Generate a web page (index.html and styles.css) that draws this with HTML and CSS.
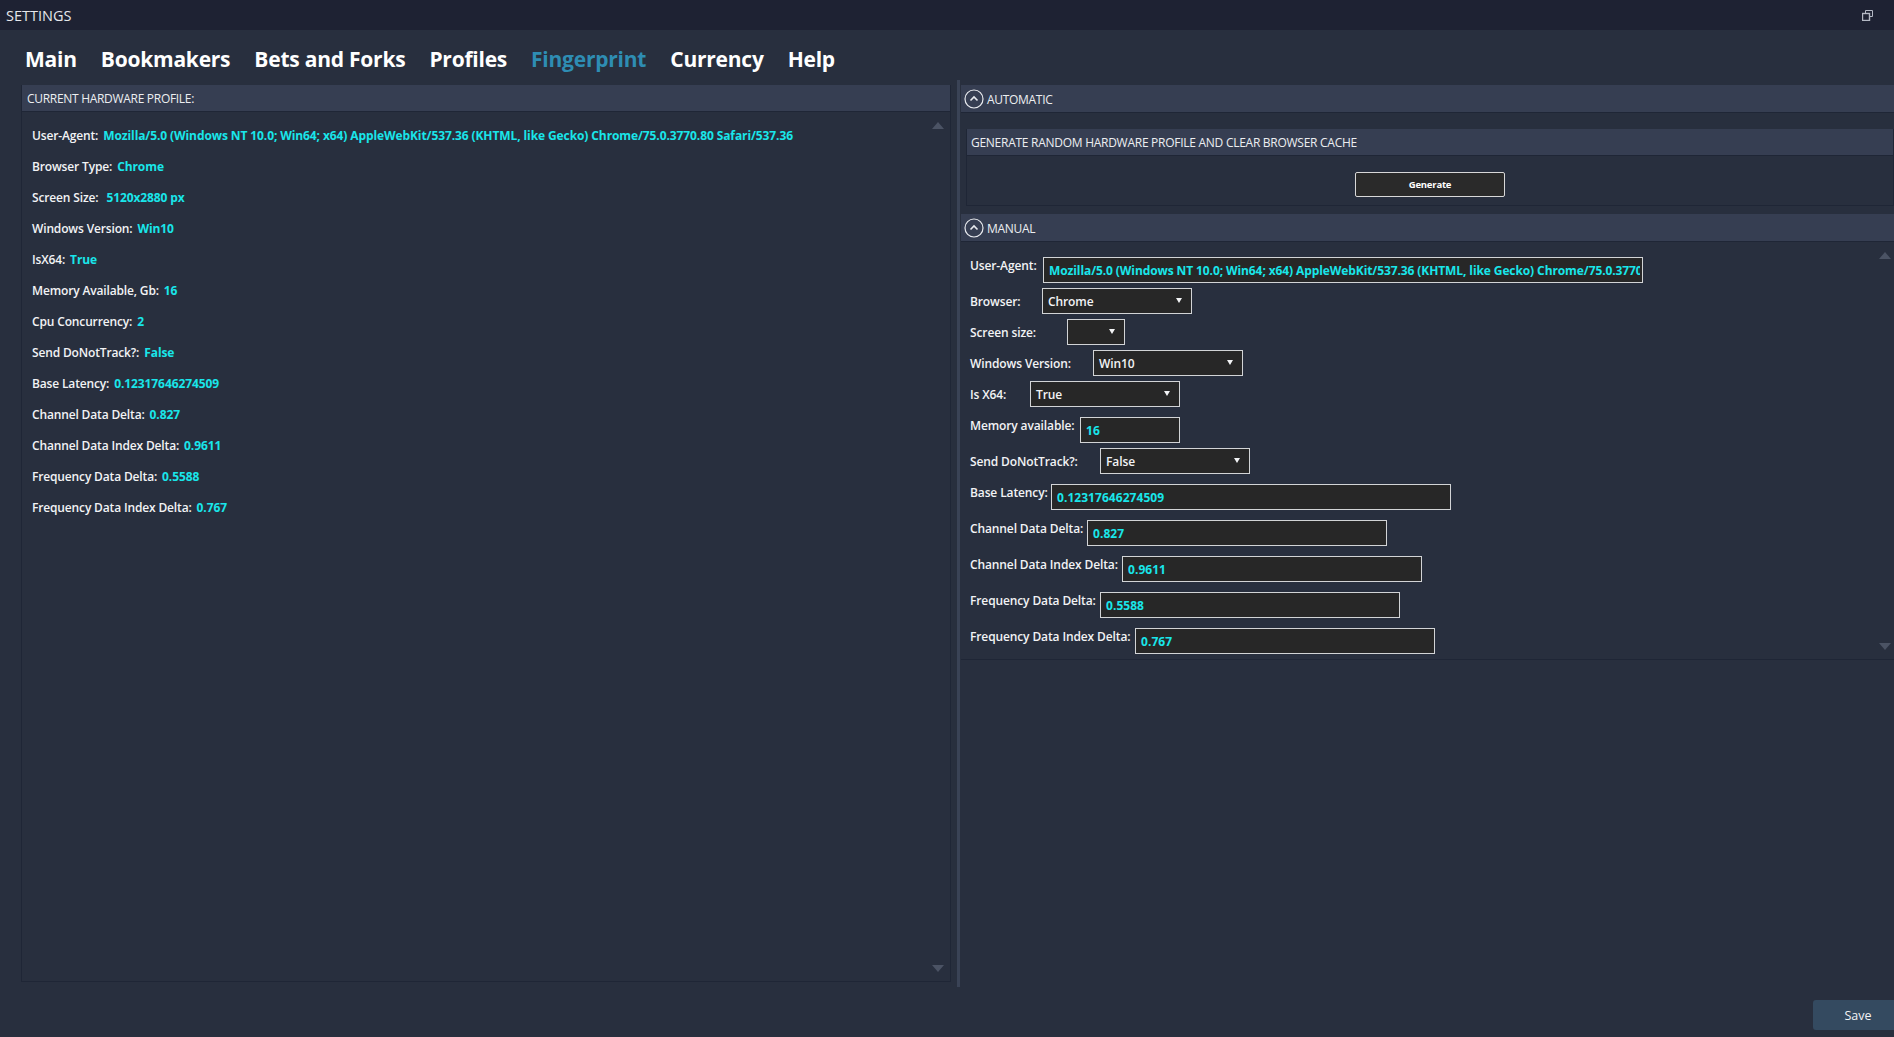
FILE: index.html
```html
<!DOCTYPE html>
<html lang="en">
<head>
    <meta charset="UTF-8">
    <title>Settings</title>
    <link rel="stylesheet" href="styles.css">
</head>
<body>
    <div class="titlebar">
        <span class="title">SETTINGS</span>
        <svg class="restore" width="11" height="11" viewBox="0 0 11 11" fill="none" stroke="#b4b8c4" stroke-width="1">
            <path d="M3.5 3V.5h7v6H8"/>
            <rect x=".5" y="3.5" width="7" height="7" stroke-width="1.4"/>
        </svg>
    </div>

    <nav class="tabs">
        <a>Main</a>
        <a>Bookmakers</a>
        <a>Bets and Forks</a>
        <a>Profiles</a>
        <a class="active">Fingerprint</a>
        <a>Currency</a>
        <a>Help</a>
    </nav>

    <div class="columns">
        <section class="current">
            <div class="bar">CURRENT HARDWARE PROFILE:</div>
            <div class="current-list">
                <span class="arrow arrow-up"></span>
                <p><b>User-Agent:</b><i>Mozilla/5.0 (Windows NT 10.0; Win64; x64) AppleWebKit/537.36 (KHTML, like Gecko) Chrome/75.0.3770.80 Safari/537.36</i></p>
                <p><b>Browser Type:</b><i>Chrome</i></p>
                <p><b>Screen Size:</b><i class="wide">5120x2880 px</i></p>
                <p><b>Windows Version:</b><i>Win10</i></p>
                <p><b>IsX64:</b><i>True</i></p>
                <p><b>Memory Available, Gb:</b><i>16</i></p>
                <p><b>Cpu Concurrency:</b><i>2</i></p>
                <p><b>Send DoNotTrack?:</b><i>False</i></p>
                <p><b>Base Latency:</b><i>0.12317646274509</i></p>
                <p><b>Channel Data Delta:</b><i>0.827</i></p>
                <p><b>Channel Data Index Delta:</b><i>0.9611</i></p>
                <p><b>Frequency Data Delta:</b><i>0.5588</i></p>
                <p><b>Frequency Data Index Delta:</b><i>0.767</i></p>
                <span class="arrow arrow-down"></span>
            </div>
        </section>

        <div class="divider"></div>

        <section class="settings">
            <div class="bar bar-toggle">
                <svg class="chevron" width="20" height="20" viewBox="0 0 20 20" fill="none" stroke="#e8eaee">
                    <circle cx="10" cy="10" r="9" stroke-width="1.2"/>
                    <path d="M6.5 11.5 10 8l3.5 3.5" stroke-width="1.6"/>
                </svg>
                AUTOMATIC
            </div>
            <div class="auto-box">
                <div class="bar">GENERATE RANDOM HARDWARE PROFILE AND CLEAR BROWSER CACHE</div>
                <div class="auto-action">
                    <button class="generate">Generate</button>
                </div>
            </div>

            <div class="bar bar-toggle">
                <svg class="chevron" width="20" height="20" viewBox="0 0 20 20" fill="none" stroke="#e8eaee">
                    <circle cx="10" cy="10" r="9" stroke-width="1.2"/>
                    <path d="M6.5 11.5 10 8l3.5 3.5" stroke-width="1.6"/>
                </svg>
                MANUAL
            </div>
            <div class="manual">
                <span class="arrow arrow-up"></span>
                <div class="row row-text row-first">
                    <label class="l-agent">User-Agent:</label>
                    <div class="field f-agent"><span class="field-clip">Mozilla/5.0 (Windows NT 10.0; Win64; x64) AppleWebKit/537.36 (KHTML, like Gecko) Chrome/75.0.3770.80 Safari/537.36</span></div>
                </div>
                <div class="row">
                    <label class="l-browser">Browser:</label>
                    <div class="select">Chrome</div>
                </div>
                <div class="row">
                    <label class="l-screen">Screen size:</label>
                    <div class="select select-small"></div>
                </div>
                <div class="row">
                    <label class="l-windows">Windows Version:</label>
                    <div class="select">Win10</div>
                </div>
                <div class="row">
                    <label class="l-x64">Is X64:</label>
                    <div class="select">True</div>
                </div>
                <div class="row row-text">
                    <label class="l-memory">Memory available:</label>
                    <div class="field f-memory">16</div>
                </div>
                <div class="row">
                    <label class="l-track">Send DoNotTrack?:</label>
                    <div class="select">False</div>
                </div>
                <div class="row row-text">
                    <label class="l-latency">Base Latency:</label>
                    <div class="field f-latency">0.12317646274509</div>
                </div>
                <div class="row row-text">
                    <label class="l-channel">Channel Data Delta:</label>
                    <div class="field">0.827</div>
                </div>
                <div class="row row-text">
                    <label class="l-channel-index">Channel Data Index Delta:</label>
                    <div class="field">0.9611</div>
                </div>
                <div class="row row-text">
                    <label class="l-freq">Frequency Data Delta:</label>
                    <div class="field">0.5588</div>
                </div>
                <div class="row row-text">
                    <label class="l-freq-index">Frequency Data Index Delta:</label>
                    <div class="field">0.767</div>
                </div>
                <span class="arrow arrow-down"></span>
            </div>
        </section>
    </div>

    <div class="footer">
        <button class="save">Save</button>
    </div>
</body>
</html>
```

FILE: styles.css
```css
html, body {
    height: 100%;
}
body {
    margin: 0;
    display: flex;
    flex-direction: column;
    overflow: hidden;
    background-color: #282f3e;
    color: #f2f3f5;
    font-family: 'Open Sans', 'Noto Sans', sans-serif;
    font-size: 12px;
}

.titlebar {
    height: 30px;
    flex: none;
    display: flex;
    align-items: center;
    justify-content: space-between;
    padding: 0 21px 0 6px;
    box-sizing: border-box;
    background-color: #1e2233;
}
.title {
    font-size: 14.5px;
    color: #e6e8ec;
}

.tabs {
    height: 55px;
    flex: none;
    display: flex;
    align-items: center;
    gap: 24px;
    padding: 3px 0 0 25px;
    box-sizing: border-box;
}
.tabs a {
    font-size: 21px;
    font-weight: 700;
    letter-spacing: -0.23px;
    color: #fff;
}
.tabs a.active {
    color: #2e8db3;
}

.columns {
    height: 902px;
    flex: none;
    display: flex;
}
.bar {
    height: 26px;
    display: flex;
    align-items: center;
    flex: none;
    padding-left: 5px;
    background-color: #363e52;
    border-bottom: 1px solid #1f2636;
    font-size: 12px;
    letter-spacing: -0.3px;
    color: #eceef1;
}

.current {
    width: 930px;
    height: 897px;
    margin-left: 21px;
    display: flex;
    flex-direction: column;
    box-sizing: border-box;
    border-left: 1px solid #1f2636;
    border-right: 1px solid #1f2636;
    border-bottom: 1px solid #1f2636;
}
.current-list {
    position: relative;
    flex: 1;
    padding: 8px 0 0 10px;
}
.current-list p {
    height: 31px;
    margin: 0;
    display: flex;
    align-items: center;
    white-space: nowrap;
}
.current-list b {
    font-weight: 600;
    letter-spacing: -0.15px;
}
.current-list i {
    margin-left: 5px;
    font-style: normal;
    font-weight: 700;
    letter-spacing: -0.1px;
    color: #19e6ea;
}
.current-list i.wide {
    margin-left: 8px;
}

.arrow {
    position: absolute;
    right: 6px;
    width: 0;
    height: 0;
    border-left: 6px solid transparent;
    border-right: 6px solid transparent;
}
.arrow-up {
    top: 10px;
    border-bottom: 7px solid #4b5364;
}
.arrow-down {
    bottom: 9px;
    border-top: 7px solid #4b5364;
}

.divider {
    width: 3px;
    margin-left: 6px;
    margin-right: 1px;
    margin-top: -5px;
    background-color: #3a4356;
}

.settings {
    flex: 1;
    min-width: 0;
    display: flex;
    flex-direction: column;
}
.bar-toggle {
    padding-left: 3px;
    padding-top: 1px;
    gap: 3px;
}
.chevron {
    flex: none;
}

.auto-box {
    margin: 16px 0 8px 5px;
    height: 77px;
    box-sizing: border-box;
    border: 1px solid #1f2636;
    border-top: 0;
}
.auto-box .bar {
    padding-left: 4px;
    letter-spacing: -0.27px;
}
.auto-action {
    display: flex;
    justify-content: center;
    padding-top: 16px;
}
.generate {
    width: 150px;
    height: 25px;
    padding: 0;
    background-color: #2a2a2a;
    border: 1px solid #d8d8d8;
    border-radius: 2px;
    color: #fff;
    font-family: inherit;
    font-size: 9.5px;
    font-weight: 700;
    letter-spacing: -0.2px;
}

.manual {
    position: relative;
    height: 418px;
    box-sizing: border-box;
    padding: 15px 0 0 9px;
    display: flex;
    flex-direction: column;
    gap: 5px;
    border-bottom: 1px solid #1f2636;
}
.manual .arrow {
    right: 3px;
}
.manual .arrow-up {
    top: 10px;
}
.manual .arrow-down {
    bottom: 9px;
}
.row {
    display: flex;
    align-items: center;
    height: 26px;
    flex: none;
}
.row-text {
    margin-top: 5px;
    align-items: flex-start;
}
.row-first {
    margin-top: 0;
}
.row label {
    flex: none;
    padding-top: 1px;
    font-weight: 600;
    letter-spacing: -0.12px;
    white-space: nowrap;
}
.row-text label {
    padding-top: 0;
    line-height: 18px;
}

.l-agent { width: 73px; }
.l-browser { width: 72px; }
.l-screen { width: 97px; }
.l-windows { width: 123px; }
.l-x64 { width: 60px; }
.l-memory { width: 110px; }
.l-track { width: 130px; }
.l-latency { width: 81px; }
.l-channel { width: 117px; }
.l-channel-index { width: 152px; }
.l-freq { width: 130px; }
.l-freq-index { width: 165px; }

.field,
.select {
    height: 26px;
    box-sizing: border-box;
    background-color: #272727;
    border: 1px solid #d2d4d6;
    line-height: 26px;
    padding-left: 5px;
    font-weight: 600;
    white-space: nowrap;
    overflow: hidden;
}
.field {
    width: 300px;
    color: #19e6ea;
    font-weight: 700;
    letter-spacing: 0.05px;
}
.f-agent {
    width: 600px;
    padding-right: 2px;
    letter-spacing: -0.1px;
}
.field-clip {
    display: block;
    height: 24px;
    overflow: hidden;
}
.f-memory {
    width: 100px;
}
.f-latency {
    width: 400px;
}
.select {
    position: relative;
    width: 150px;
    color: #f2f3f5;
    letter-spacing: -0.1px;
}
.select-small {
    width: 58px;
}
.select::after {
    content: "";
    position: absolute;
    right: 9px;
    top: 9px;
    border-left: 3px solid transparent;
    border-right: 3px solid transparent;
    border-top: 5px solid #f2f3f5;
}

.footer {
    flex: 1;
    display: flex;
    justify-content: flex-end;
    align-items: flex-start;
    padding-top: 13px;
}
.save {
    width: 81px;
    height: 30px;
    padding: 1px 0 0 9px;
    background-color: #344a60;
    border: none;
    border-radius: 3px 0 0 3px;
    color: #f2f3f5;
    font-family: inherit;
    font-size: 12.5px;
}
```
